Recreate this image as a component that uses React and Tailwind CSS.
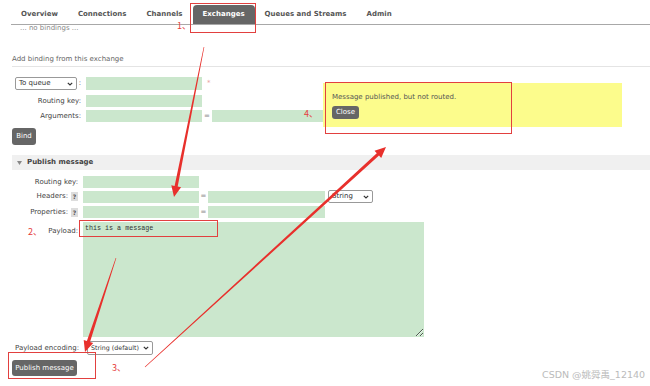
import React from 'react';

const tabs = ['Overview', 'Connections', 'Channels', 'Exchanges', 'Queues and Streams', 'Admin'];

// tapered arrow polygon, thin at the tail and thick at the head
const arrowPoints = (x1, y1, x2, y2, w0 = 0.3, w1 = 1.6, hw = 5, hl = 11) => {
  const dx = x2 - x1;
  const dy = y2 - y1;
  const len = Math.hypot(dx, dy);
  const ux = dx / len;
  const uy = dy / len;
  const nx = -uy;
  const ny = ux;
  const bx = x2 - ux * hl;
  const by = y2 - uy * hl;
  const pts = [
    [x1 + nx * w0, y1 + ny * w0],
    [bx + nx * w1, by + ny * w1],
    [bx + nx * hw, by + ny * hw],
    [x2, y2],
    [bx - nx * hw, by - ny * hw],
    [bx - nx * w1, by - ny * w1],
    [x1 - nx * w0, y1 - ny * w0],
  ];
  return pts.map((p) => p.map((v) => v.toFixed(1)).join(',')).join(' ');
};

const Chevron = () => (
  <svg width="6" height="4" viewBox="0 0 6 4" className="shrink-0">
    <path d="M0.8 0.8 L3 3 L5.2 0.8" fill="none" stroke="#333" strokeWidth="1.2" />
  </svg>
);

const FakeSelect = ({ label, className }) => (
  <div className={`flex items-center justify-between whitespace-nowrap border border-[#999] rounded-[2px] bg-white pl-[3px] pr-[3px] text-[#333] ${className}`}>
    <span>{label}</span>
    <Chevron />
  </div>
);

const Field = ({ className = 'w-[116px]' }) => <div className={`h-[12px] bg-[#cbe7cd] ${className}`} />;

const Help = () => (
  <span className="ml-[3px] inline-flex w-[7px] h-[9px] items-center justify-center bg-[#ddd] font-bold text-[#555] text-[6px]">?</span>
);

const Button = ({ children, className }) => (
  <div className={`flex items-center justify-center rounded-[3px] bg-[#666] text-white whitespace-nowrap ${className}`}>{children}</div>
);

const RedBox = ({ className }) => <div className={`absolute border-[1.5px] border-[#e2403f] ${className}`} />;

const Mark = ({ children, className }) => (
  <div className={`absolute text-[9px] leading-none text-[#e5403c] font-['Noto_Sans_CJK_SC',sans-serif] ${className}`}>{children}</div>
);

export default function App() {
  return (
    <div className="relative w-[650px] h-[386px] overflow-hidden bg-white font-['DejaVu_Sans',sans-serif] text-[7px] text-[#444]">
      {/* Tabs */}
      <div className="ml-[11px] pt-[5px] flex border-b border-[#a8a8a8]">
        {tabs.map((t) => (
          <div
            key={t}
            className={`h-[19px] px-[10px] flex items-center font-bold ${
              t === 'Exchanges' ? 'bg-[#666] text-white rounded-t-[4px]' : 'text-[#555]'
            }`}
          >
            {t}
          </div>
        ))}
      </div>
      <div className="pl-[20px] h-[8px] leading-[6px] text-[#888]">... no bindings ...</div>

      {/* Add binding */}
      <div className="ml-[12px] mt-[22px] pb-[2px] leading-[9px] text-[#666] border-b border-[#e4e4e4]">
        Add binding from this exchange
      </div>

      <div className="ml-[12px] mt-[10px] flex items-center">
        <div className="w-[69px] pl-[3px] flex items-center">
          <FakeSelect label="To queue" className="w-[62px] h-[13px]" />
          <span className="ml-[2px]">:</span>
        </div>
        <Field className="ml-[5px] w-[116px] h-[13px]" />
        <span className="ml-[5px] text-[#e9a0a0]">*</span>
      </div>
      <div className="ml-[12px] mt-[5px] flex items-center">
        <div className="w-[69px] text-right">Routing key:</div>
        <Field className="ml-[5px] w-[116px]" />
      </div>
      <div className="ml-[12px] mt-[3px] flex items-center">
        <div className="w-[69px] text-right">Arguments:</div>
        <Field className="ml-[5px] w-[116px]" />
        <span className="w-[10px] text-center text-[#888]">=</span>
        <Field className="w-[116px]" />
      </div>
      <Button className="ml-[12px] mt-[6px] w-[24px] h-[17px]">Bind</Button>

      {/* Publish message */}
      <div className="ml-[12px] mt-[10px] h-[15px] bg-[#f0f0f0] flex items-center pl-[5px]">
        <svg width="5" height="4" viewBox="0 0 5 4">
          <path d="M0 0 L5 0 L2.5 4 Z" fill="#888" />
        </svg>
        <span className="ml-[5px] font-bold text-[#444]">Publish message</span>
      </div>

      <div className="mt-[6px] flex items-center">
        <div className="w-[78px] text-right">Routing key:</div>
        <Field className="ml-[5px] w-[116px]" />
      </div>
      <div className="mt-[2px] flex items-center h-[13px]">
        <div className="w-[78px] flex items-center justify-end">
          Headers:<Help />
        </div>
        <Field className="ml-[5px] w-[116px]" />
        <span className="w-[9px] text-center text-[#888]">=</span>
        <Field className="w-[117px]" />
        <FakeSelect label="String" className="ml-[3px] w-[45px] h-[13px]" />
      </div>
      <div className="mt-[3px] flex items-center">
        <div className="w-[78px] flex items-center justify-end">
          Properties:<Help />
        </div>
        <Field className="ml-[5px] w-[116px]" />
        <span className="w-[9px] text-center text-[#888]">=</span>
        <Field className="w-[117px]" />
      </div>
      <div className="mt-[4px] flex items-start">
        <div className="w-[78px] pt-[4px] text-right">Payload:</div>
        <textarea
          readOnly
          defaultValue="this is a message"
          className="ml-[5px] w-[341px] h-[115px] bg-[#cbe7cd] px-[2px] py-[2px] font-['Liberation_Mono',monospace] text-[6.7px] leading-[8px] text-[#333] outline-none"
        />
      </div>
      <div className="mt-[4px] flex items-center pl-[15px]">
        <span>Payload encoding:</span>
        <FakeSelect label="String (default)" className="ml-[8px] w-[66px] h-[14px] text-[6.3px]" />
      </div>
      <Button className="ml-[12px] mt-[5px] w-[65px] h-[16px]">Publish message</Button>

      {/* Popup */}
      <div className="absolute left-[323px] top-[83px] w-[299px] h-[44px] bg-[#fcfc8c] pl-[9px] pt-[10px]">
        <div className="leading-[9px] text-[#555]">Message published, but not routed.</div>
        <Button className="mt-[4px] w-[27px] h-[13px]">Close</Button>
      </div>

      {/* Annotations */}
      <RedBox className="left-[190px] top-[3px] w-[66px] h-[30px]" />
      <RedBox className="left-[325px] top-[82px] w-[187px] h-[52px]" />
      <RedBox className="left-[79px] top-[220px] w-[139px] h-[17px]" />
      <RedBox className="left-[8px] top-[352px] w-[88px] h-[27px]" />
      <Mark className="left-[177px] top-[21px]">1、</Mark>
      <Mark className="left-[28px] top-[227px]">2、</Mark>
      <Mark className="left-[112px] top-[363px]">3、</Mark>
      <Mark className="left-[304px] top-[109px]">4、</Mark>
      <svg className="absolute left-0 top-0 pointer-events-none" width="650" height="386">
        <polygon points={arrowPoints(204, 47, 174, 197)} fill="#e8302c" />
        <polygon points={arrowPoints(116, 258, 85, 352)} fill="#e8302c" />
        <polygon points={arrowPoints(145, 367, 386, 147)} fill="#e8302c" />
      </svg>

      <div className="absolute left-[542px] top-[370px] text-[9.5px] leading-none text-[#bbb] font-['DejaVu_Sans','Noto_Sans_CJK_SC',sans-serif]">
        CSDN @姚舜禹_12140
      </div>
    </div>
  );
}
